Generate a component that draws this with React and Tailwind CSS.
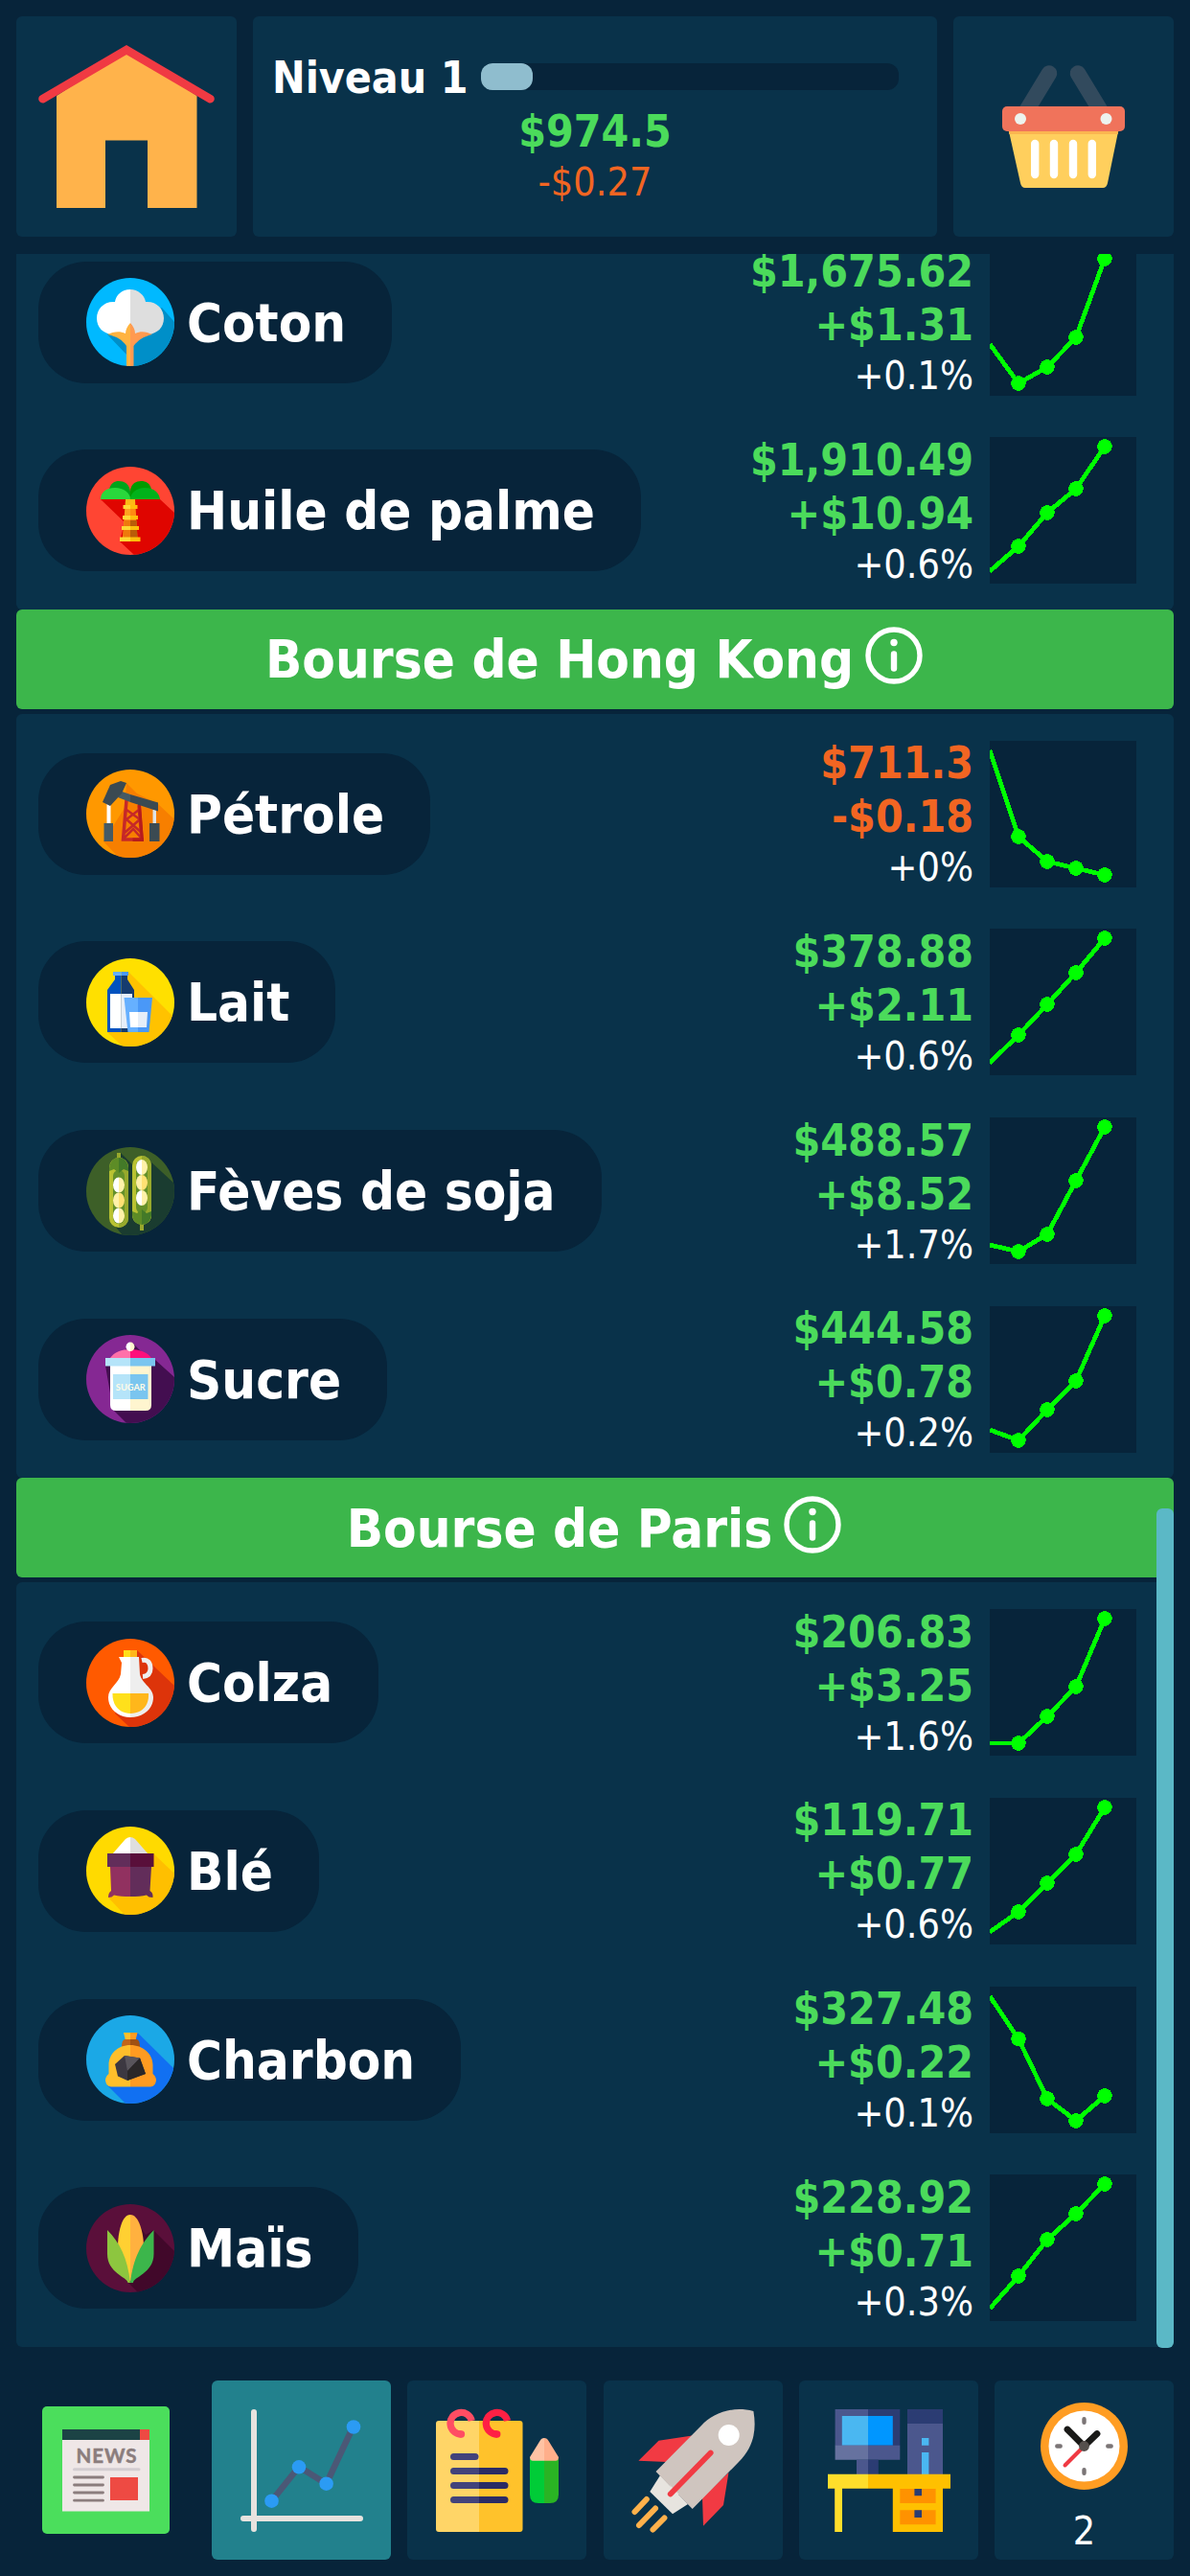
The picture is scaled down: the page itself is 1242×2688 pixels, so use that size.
import React from "react";

/* ---------- commodity icons (92 x 92 discs) ---------- */

function Disc({ id, color, children }) {
  return (
    <svg viewBox="0 0 92 92" className="block h-[92px] w-[92px] shrink-0">
      <defs>
        <clipPath id={id}>
          <circle cx="46" cy="46" r="46" />
        </clipPath>
      </defs>
      <g clipPath={`url(#${id})`}>
        <rect width="92" height="92" fill={color} />
        {children}
      </g>
    </svg>
  );
}

const Cotton = () => (
  <Disc id="cotton" color="#00b9ff">
    <path d="M79 31L92 46V92H42V80L22 59Z" fill="#008fc8" />
    <path d="M46 12C37 12 31 18 30 25C19 24 11 32 11 42C11 52 18 58 27 59H46Z" fill="#fff" />
    <path d="M46 12C54 12 61 18 62 25C73 24 81 32 81 42C81 52 74 58 65 59H46Z" fill="#dedede" />
    <path d="M46 47C43 50 41 54 41 58C35 55 28 56 22 59C32 61 38 65 42 71V92H46Z" fill="#ffb340" />
    <path d="M46 47C49 50 51 54 51 58C57 55 63 56 69 59C60 61 54 65 49.500 71V92H46Z" fill="#ff9a50" />
  </Disc>
);

const Palm = () => (
  <Disc id="palm" color="#ff4533">
    <path d="M15 34H77L92 48V92H50L35 78L40 58Z" fill="#df0500" />
    <path d="M24 24C25 18 29 15 34 15C41 15 45 19 46 26V34H24Z" fill="#00a41a" />
    <path d="M46 26C46 19 51 15 57 15C63 15 67 18 68 24V34H46Z" fill="#009b00" />
    <path d="M15 34C15 27 20 22 30 22C39 22 46 27 46 34Z" fill="#29d83c" />
    <path d="M46 34C46 27 53 22 61 22C71 22 76 27 77 34Z" fill="#00b21a" />
    <path d="M41 34H46V75H38Z" fill="#ffa21f" />
    <path d="M46 34H51L53.500 75H46Z" fill="#ff8a12" />
    <path d="M39.500 56H46V75H38.500Z" fill="#ee7a0c" />
    <path d="M46 56H52.500L53.500 75H46Z" fill="#b95c08" />
    <path d="M38.500 40H46V44H38.500ZM38 51H46V55H38ZM37 62H46V66H37ZM35 73.500H46V78H35Z" fill="#ffd833" />
    <path d="M46 40H53.500V44H46ZM46 51H54V55H46ZM46 62H55V66H46ZM46 73.500H56.500V78H46Z" fill="#ffbd0a" />
    <path d="M41 34H51V40H41Z" fill="#ffb816" />
  </Disc>
);

const Oil = () => (
  <Disc id="oil" color="#ff9800">
    <path d="M42 14L53 25L75 36L92 52V92H34L18 75L40 40Z" fill="#f77f00" />
    <path d="M42 32L38.500 73H58L55 37" fill="none" stroke="#c62828" strokeWidth="3.500" />
    <path d="M42 42L56 52L40 66M55 42L42 52L58 66M39 72L49 62L58 72" fill="none" stroke="#c62828" strokeWidth="2.500" />
    <path d="M48.500 71.500H60V75H48.500ZM54 36H57L60 75H57Z" fill="#b71c1c" />
    <path d="M21.500 36H25.500V56H21.500Z" fill="#fff" />
    <path d="M69.500 42H73V56H69.500Z" fill="#dfe3e6" />
    <path d="M18.500 56H28V75H18.500Z" fill="#455a64" />
    <path d="M66 56H76.500V75H66Z" fill="#3b4a52" />
    <path d="M37.500 23L46 26V34L33 29Z" fill="#455a64" />
    <path d="M46 26L75 34.500V43.500L46 34Z" fill="#3b4a52" />
    <path d="M17 34L25 16L36 12L42 14L37 25L25 38Z" fill="#3b4a52" />
  </Disc>
);

const Milk = () => (
  <Disc id="milk" color="#ffe000">
    <path d="M44 14L92 62V92H38L22 77Z" fill="#ffc200" />
    <path d="M28 14H36.500V18H28Z" fill="#66b0ff" />
    <path d="M36.500 14H44V18H36.500Z" fill="#4a98f7" />
    <path d="M30 18H36.500V77H22V33L30 22Z" fill="#0052bf" />
    <path d="M36.500 18H43V22L50 33V77H36.500Z" fill="#163c6f" />
    <path d="M25 37H36.500V73H25Z" fill="#fff" />
    <path d="M36.500 37H48V73H36.500Z" fill="#e6eef8" />
    <path d="M39.500 41H54V77H43.500Z" fill="#66b0ff" />
    <path d="M54 41H69L65.500 77H54Z" fill="#4a98f7" />
    <path d="M45 56H54V72H46Z" fill="#fff" />
    <path d="M54 56H64L63 72H54Z" fill="#e6eef8" />
  </Disc>
);

const Bean = ({ x, y, a, b }) => (
  <>
    <path d={`M${x} ${y - 8}a6 8 0 0 0 0 16z`} fill={a} />
    <path d={`M${x} ${y - 8}a6 8 0 0 1 0 16z`} fill={b} />
  </>
);

const Soy = () => (
  <Disc id="soy" color="#3d5f28">
    <path d="M36 6L50 20L66 14L92 38V92H38L28 80Z" fill="#1a3c30" />
    <path d="M32 6H36V14H32Z" fill="#98a82c" />
    <rect x="24" y="11" width="20" height="73" rx="10" fill="#b9c232" />
    <path d="M34 11A10 10 0 0 1 44 21V74A10 10 0 0 1 34 84Z" fill="#97a92c" />
    <rect x="28" y="24" width="12" height="56" rx="6" fill="#64902a" />
    <path d="M24 22A10 11 0 0 1 34 11V27L29 23L24 25Z" fill="#5d8c26" />
    <path d="M34 11A10 11 0 0 1 44 22V25L39 23L34 27Z" fill="#437a28" />
    <Bean x={34} y={39.5} a="#fff" b="#fff1a8" />
    <Bean x={34} y={55.5} a="#fff1a8" b="#ffe173" />
    <Bean x={34} y={71.5} a="#fff" b="#fff1a8" />
    <path d="M56 78H60V87H56Z" fill="#98a82c" />
    <rect x="48" y="9" width="20" height="72" rx="10" fill="#b9c232" />
    <path d="M58 9A10 10 0 0 1 68 19V71A10 10 0 0 1 58 81Z" fill="#97a92c" />
    <rect x="52" y="13" width="12" height="56" rx="6" fill="#64902a" />
    <path d="M48 67L53 69L58 65V81A10 11 0 0 1 48 71Z" fill="#5d8c26" />
    <path d="M68 67L63 69L58 65V81A10 11 0 0 0 68 71Z" fill="#437a28" />
    <Bean x={58} y={21} a="#fff" b="#fff1a8" />
    <Bean x={58} y={37} a="#fff1a8" b="#ffe173" />
    <Bean x={58} y={53} a="#fff" b="#fff1a8" />
  </Disc>
);

const Sugar = () => (
  <Disc id="sugar" color="#852893">
    <path d="M49 9L60 20L72 26L92 44V92H42L28 78L20 32Z" fill="#430e50" />
    <path d="M25 24C29 18 37 15 46 15V24Z" fill="#ff70a9" />
    <path d="M68 24C64 18 55 15 46 15V24Z" fill="#ff0f7c" />
    <path d="M46 7.500a4.500 4.800 0 0 0 0 9.600z" fill="#fff" />
    <path d="M46 7.500a4.500 4.800 0 0 1 0 9.600z" fill="#fff5cf" />
    <path d="M25 32H46V79H31Q25 79 25 73Z" fill="#fff" />
    <path d="M46 32H68V73Q68 79 62 79H46Z" fill="#fff5cf" />
    <path d="M20 24H46V32.500H20ZM28 41H46V67H28Z" fill="#b5e4f9" />
    <path d="M46 24H72V32.500H46ZM46 41H64.500V67H46Z" fill="#7ac5ef" />
    <text x="46.300" y="57.700" textAnchor="middle" textLength="31" lengthAdjust="spacingAndGlyphs" fontFamily="Lato, sans-serif" fontWeight="700" fontSize="9.800" fill="#fffbe8">SUGAR</text>
  </Disc>
);

const Rapeseed = () => (
  <Disc id="rapeseed" color="#ff5a00">
    <path d="M53 12L92 49V92H45L30 78Z" fill="#dd340a" />
    <path d="M58 22.500C64 21 67 25 67 31C67 36 64 39 59 39.500" fill="none" stroke="#eee" strokeWidth="5" />
    <path d="M39 12H46V20H39Z" fill="#ffe01b" />
    <path d="M46 12H53V20H46Z" fill="#ffb71b" />
    <path d="M34 19H46V82C33 82 23 73 23 61C23 51 34 47 36 37L37 25Z" fill="#fff" />
    <path d="M46 19H55L56 37C58 47 70 51 70 61C70 73 60 82 46 82Z" fill="#eee" />
    <path d="M27.500 57H46V78C36 78 27 71 27.500 57Z" fill="#ffe01b" />
    <path d="M46 57H65C66 71 57 78 46 78Z" fill="#ffb71b" />
  </Disc>
);

const Wheat = () => (
  <Disc id="wheat" color="#ffda00">
    <path d="M70 28L92 49V92H40L23 74Z" fill="#ffbf00" />
    <path d="M27 29L41 13Q43.500 11 46 11V29Z" fill="#fff" />
    <path d="M65 29L51 13Q48.500 11 46 11V29Z" fill="#dedede" />
    <path d="M25 42H46V73Q36 73 29 71.500Q27 74 23 74Q23 69 26 67Z" fill="#913160" />
    <path d="M68 42H46V73Q56 73 63 71.500Q65 74 69.500 74Q70 69 66.500 67Z" fill="#622d5a" />
    <path d="M22 28H46V42H22Z" fill="#622d5a" />
    <path d="M46 28H70.500V42H46Z" fill="#590f3a" />
  </Disc>
);

const Coal = () => (
  <Disc id="coal" color="#1ba8e6">
    <path d="M53.500 18L92 56V92H41L22 73Z" fill="#1170f2" />
    <path d="M39 18H46V26H41Z" fill="#ffbf2b" />
    <path d="M53.500 18H46V26H51.500Z" fill="#ff9b21" />
    <path d="M46 25H40Q37 26 37 33H46Z" fill="#c3661a" />
    <path d="M46 25H53Q56 26 56 33H46Z" fill="#a05012" />
    <path d="M46 31C33 31 23.500 40 23.500 52V61Q20 64 20 68Q21 74 26 74.500H46Z" fill="#ffbf2b" />
    <path d="M46 31C59 31 69.500 40 69.500 52V61Q73 64 73 68Q72 74 67 74.500H46Z" fill="#ff9b21" />
    <path d="M40 42L56 44.500L62 61L43 68L33 63.500L30 51Z" fill="#3c3841" />
    <path d="M40 42L56 44.500L43 58Z" fill="#59555c" />
    <path d="M56 44.500L62 61L43 68V58Z" fill="#2a2728" />
  </Disc>
);

const Corn = () => (
  <Disc id="corn" color="#5a0f3a">
    <path d="M50 14L62 32L70 27L92 49V92H54L42 80Z" fill="#41082a" />
    <path d="M46 11C37 11 33 30 33 45L45 80H46Z" fill="#ffd032" />
    <path d="M46 11C55 11 60 30 60 45L47 80H46Z" fill="#ffb13f" />
    <path d="M22 27C35 40 43 56 46 82H43.500C43 76 22 72 22 52Z" fill="#8dc63f" />
    <path d="M70.500 27C58 40 49 56 46 82H49C49 76 70.500 72 70.500 52Z" fill="#3cb64b" />
  </Disc>
);

/* ---------- top bar icons ---------- */

const House = () => (
  <svg viewBox="17 17 230 230" className="block h-full w-full">
    <path d="M59 100L132 52L205.500 100V217H154V146.500H110V217H59Z" fill="#ffb34b" />
    <path d="M44.500 103.200L132 52L219.500 103.200" fill="none" stroke="#f03a43" strokeWidth="8.600" strokeLinecap="round" />
  </svg>
);

const Basket = () => (
  <svg viewBox="995 17 230 230" className="block h-full w-full">
    <path d="M1068 121L1095 76.500M1152 121L1125 76.500" stroke="#324a5d" strokeWidth="16.500" strokeLinecap="round" />
    <path d="M1052.500 135H1167.500L1156 191Q1155 196 1151 196H1070Q1066 196 1065 191Z" fill="#ffcf5d" />
    <path d="M1052.500 135H1167.500L1166.800 140H1053.300Z" fill="#fbb550" />
    <rect x="1046" y="111" width="128" height="26" rx="5" fill="#f0735b" />
    <circle cx="1065" cy="124" r="6" fill="#edf3ee" />
    <circle cx="1154.500" cy="124" r="6" fill="#edf3ee" />
    <path d="M1080.200 150V182M1100 150V182M1120 150V182M1139.800 150V182" stroke="#fff" strokeWidth="8.400" strokeLinecap="round" />
  </svg>
);

/* ---------- bottom bar icons (187 x 187 tiles) ---------- */

const TileSvg = ({ children }) => (
  <svg viewBox="0 0 187 187" className="block h-full w-full">
    {children}
  </svg>
);

const News = () => (
  <TileSvg>
    <g transform="translate(27 27)">
      <rect width="133" height="133" rx="5" fill="#4bde5c" />
      <path d="M21 24H102V35H21Z" fill="#1c4345" />
      <path d="M102 24H112V35H102Z" fill="#ee4a43" />
      <path d="M21 35H112V109.500H21Z" fill="#efe7e7" />
      <text x="67" y="58.700" textAnchor="middle" textLength="63" lengthAdjust="spacing" fontFamily="Lato, sans-serif" fontWeight="700" fontSize="20.500" fill="#8b7d7d" stroke="#8b7d7d" strokeWidth="0.500">NEWS</text>
      <path d="M33.500 65.700H101" stroke="#d3cdd1" strokeWidth="3" strokeLinecap="round" />
      <path d="M33.500 74H63.500M33.500 82H63.500M33.500 90H63.500M33.500 98.200H63.500" stroke="#8b7d7d" strokeWidth="2.800" strokeLinecap="round" />
      <path d="M71 74H100V98H71Z" fill="#ee4a43" />
    </g>
  </TileSvg>
);

const Trend = () => (
  <TileSvg>
    <path d="M62.500 125.700L91 90L119.600 107.700L147.700 48" fill="none" stroke="#4b5876" strokeWidth="6.500" />
    <path d="M33 144H155M44 33V155" stroke="#e7e3df" strokeWidth="6" strokeLinecap="round" />
    <circle cx="62.500" cy="125.700" r="7.300" fill="#2b9bf4" />
    <circle cx="91" cy="90.300" r="7.300" fill="#2b9bf4" />
    <circle cx="119.600" cy="107.700" r="7.300" fill="#2b9bf4" />
    <circle cx="148" cy="48.500" r="7.300" fill="#2b9bf4" />
  </TileSvg>
);

const Notes = () => (
  <TileSvg>
    <path d="M75 42H33Q30 42 30 45V155Q30 158 33 158H75Z" fill="#ffd567" />
    <path d="M75 42H117.500Q120.500 42 120.500 45V155Q120.500 158 117.500 158H75Z" fill="#ffc22b" />
    <path d="M67.300 42A11.300 11.300 0 1 0 56.500 56" fill="none" stroke="#ff4d63" strokeWidth="7.300" />
    <circle cx="56.500" cy="56" r="3.650" fill="#ff4d63" />
    <path d="M104.600 42A11.300 11.300 0 1 0 93.800 56" fill="none" stroke="#ff2044" strokeWidth="7.300" />
    <circle cx="93.800" cy="56" r="3.650" fill="#ff2044" />
    <path d="M48.500 79.500H71" stroke="#43437b" strokeWidth="7" strokeLinecap="round" />
    <path d="M80 94.500H102M80 109.500H102M80 124.500H102" stroke="#2b2b64" strokeWidth="7" strokeLinecap="round" />
    <path d="M75 91H85V98H75ZM75 106H85V113H75ZM75 121H85V128H75Z" fill="#2b2b64" />
    <path d="M75 91H48.500a3.500 3.500 0 0 0 0 7H75ZM75 106H48.500a3.500 3.500 0 0 0 0 7H75ZM75 121H48.500a3.500 3.500 0 0 0 0 7H75Z" fill="#43437b" />
    <path d="M128 82H143V128H137Q128 128 128 119Z" fill="#00cc37" />
    <path d="M143 82H158V119Q158 128 149 128H143Z" fill="#2ab424" />
    <path d="M143 60Q140 60 138.500 63L128 80Q128 83.700 131 83.700H143Z" fill="#ffc3a4" />
    <path d="M143 60Q146 60 147.500 63L158 80Q158 83.700 155 83.700H143Z" fill="#ffaf8b" />
  </TileSvg>
);

const Rocket = () => (
  <TileSvg>
    <path d="M92.500 57.500L57.500 62.700L36.400 83.700L66 85ZM130.500 96L125 130L104 151.700L103 122Z" fill="#f13a43" />
    <path d="M59 99L48.300 116L72 139.300L88 129Z" fill="#e7e4df" />
    <path d="M54.500 95L102 47C113 35 133 26 156.400 32C160 53 156 70 141 85L92.700 134Z" fill="#cfc5bf" />
    <path d="M69 109L78.500 118.500L74 121Z" fill="#e7e4df" />
    <circle cx="130.700" cy="57" r="11" fill="#fff" />
    <path d="M111.700 75.500L69.700 118.500" stroke="#f13a43" strokeWidth="5.800" strokeLinecap="round" />
    <path d="M44.800 124L32.500 137M54 133.500L37 151M63.400 143.500L51.500 155.500" stroke="#ffb14b" strokeWidth="6" strokeLinecap="round" />
  </TileSvg>
);

const Desk = () => (
  <TileSvg>
    <path d="M37.600 30H72V68H37.600Z" fill="#4b578d" />
    <path d="M72 30H105.300V68H72Z" fill="#2b3c73" />
    <path d="M44.800 37H72V67.700H44.800Z" fill="#4ab7f1" />
    <path d="M72 37H97.800V67.700H72Z" fill="#0096ff" />
    <path d="M37.600 67.700H72V82.700H37.600Z" fill="#66729f" />
    <path d="M72 67.700H105.300V82.700H72Z" fill="#4b578d" />
    <path d="M60 82.700H72V98H60Z" fill="#4b578d" />
    <path d="M72 82.700H82.800V98H72Z" fill="#2b3c73" />
    <path d="M113 30H150V98H113Z" fill="#4b578d" />
    <path d="M113 30H150V45H113Z" fill="#2b3c73" />
    <path d="M128 60H135.400V67.700H128ZM128 75H135.400V98H128Z" fill="#4ab7f1" />
    <path d="M30 97.700H72V112.700H30ZM37.200 112.700H45V158H37.200Z" fill="#ffde2b" />
    <path d="M72 97.700H158V112.700H72ZM97.800 112.700H150V158H97.800Z" fill="#ffc000" />
    <path d="M105.300 113H142.600V128H105.300ZM105.300 135.300H142.600V150.300H105.300Z" fill="#ff9200" />
    <path d="M120.400 113H128V120.300H120.400ZM120.400 135.300H128V143H120.400Z" fill="#2b3c73" />
  </TileSvg>
);

const Clock = () => (
  <svg viewBox="0 0 91 91" className="mt-[23px] block h-[91px] w-[91px]">
    <circle cx="45.500" cy="45.500" r="45.500" fill="#ff9d23" />
    <circle cx="45.500" cy="45.500" r="37" fill="#fff" />
    <path d="M45.500 17.300V20.700M45.500 70.300V73.700M17.300 45.500H20.700M70.300 45.500H73.700" stroke="#7b7576" strokeWidth="4.400" strokeLinecap="round" />
    <path d="M45.500 45.500L25.500 65.500" stroke="#f03a43" strokeWidth="4" strokeLinecap="round" />
    <path d="M45.500 45.500L28 28M45.500 45.500L59 32.500" stroke="#1a1a18" strokeWidth="6.800" strokeLinecap="round" />
    <circle cx="45.500" cy="45.500" r="5.400" fill="#55504d" />
  </svg>
);

/* ---------- market list ---------- */

const InfoIcon = () => (
  <svg viewBox="0 0 60 60" className="mb-[7px] ml-[12px] mr-[3px] block h-[60px] w-[60px]" fill="none" stroke="#fff" strokeLinecap="round">
    <circle cx="30" cy="30" r="27" strokeWidth="5.400" />
    <path d="M30 28.500V43.500" strokeWidth="6.400" />
    <circle cx="30" cy="16.500" r="3.700" fill="#fff" stroke="none" />
  </svg>
);

function Sparkline({ data }) {
  const points = data.map((y, i) => [i * 30, y]);
  return (
    <svg viewBox="0 0 153 153" shapeRendering="crispEdges" className="block h-[153px] w-[153px] bg-[#07243a]">
      <polyline points={points.map((p) => p.join(",")).join(" ")} fill="none" stroke="#00ff00" strokeWidth="4.800" />
      {points.slice(1).map(([x, y]) => (
        <circle key={x} cx={x} cy={y} r="7.800" fill="#00ff00" />
      ))}
    </svg>
  );
}

function Row({ item }) {
  const Icon = item.icon;
  return (
    <div className="flex h-[196.7px] shrink-0 items-center justify-between pl-[23px] pr-[39px]">
      <div className="flex h-[127px] items-center rounded-[50px] bg-[#07243a] pr-[48px] pl-[50px]">
        <Icon />
        <span className="ml-[13px] mt-[1px] whitespace-nowrap text-[56px] font-bold text-white">{item.name}</span>
      </div>
      <div className="flex items-center">
        <div className={"mt-[1px] mr-[17px] text-right text-[46px] leading-[56px] font-bold " + (item.down ? "text-[#f26522]" : "text-[#4bdb5b]")}>
          <div>{item.price}</div>
          <div>{item.change}</div>
          <div className="text-[41px] leading-[51px] font-normal text-white">{item.percent}</div>
        </div>
        <Sparkline data={item.data} />
      </div>
    </div>
  );
}

function Panel({ items }) {
  return (
    <div className="flex shrink-0 flex-col rounded-[6px] bg-[#09324a] pt-[6px] pb-[4.8px]">
      {items.map((item) => (
        <Row key={item.name} item={item} />
      ))}
    </div>
  );
}

function MarketTitle({ children }) {
  return (
    <div className="mb-[5px] flex h-[104px] shrink-0 items-center justify-center rounded-[6px] bg-[#3cb64b]">
      <span className="ml-[1px] mt-[1px] whitespace-nowrap text-[56px] font-bold text-white">{children}</span>
      <InfoIcon />
    </div>
  );
}

const first = [
  { name: "Coton", icon: Cotton, price: "$1,675.62", change: "+$1.31", percent: "+0.1%", data: [99, 140, 123, 92, 10] },
  { name: "Huile de palme", icon: Palm, price: "$1,910.49", change: "+$10.94", percent: "+0.6%", data: [140, 114, 79, 54, 10] },
];
const hongKong = [
  { name: "Pétrole", icon: Oil, price: "$711.3", change: "-$0.18", percent: "+0%", down: true, data: [10, 100, 126, 133, 140] },
  { name: "Lait", icon: Milk, price: "$378.88", change: "+$2.11", percent: "+0.6%", data: [140, 111, 79, 46, 10] },
  { name: "Fèves de soja", icon: Soy, price: "$488.57", change: "+$8.52", percent: "+1.7%", data: [133, 140, 122, 66, 10] },
  { name: "Sucre", icon: Sugar, price: "$444.58", change: "+$0.78", percent: "+0.2%", data: [129, 140, 108, 78, 10] },
];
const paris = [
  { name: "Colza", icon: Rapeseed, price: "$206.83", change: "+$3.25", percent: "+1.6%", data: [140, 140, 112, 81, 10] },
  { name: "Blé", icon: Wheat, price: "$119.71", change: "+$0.77", percent: "+0.6%", data: [140, 119, 89, 59, 10] },
  { name: "Charbon", icon: Coal, price: "$327.48", change: "+$0.22", percent: "+0.1%", data: [10, 54.5, 117, 140, 114] },
  { name: "Maïs", icon: Corn, price: "$228.92", change: "+$0.71", percent: "+0.3%", data: [140, 106, 68, 41, 10] },
];

const tabs = [
  { id: "news", icon: News, bg: "" },
  { id: "trend", icon: Trend, bg: "bg-[#22818d]" },
  { id: "notes", icon: Notes, bg: "bg-[#09324a]" },
  { id: "rocket", icon: Rocket, bg: "bg-[#09324a]" },
  { id: "desk", icon: Desk, bg: "bg-[#09324a]" },
];

export default function App() {
  return (
    <div className="flex h-[2688px] w-[1242px] flex-col overflow-hidden bg-[#07243a] p-[17px] font-['DejaVu_Sans_Condensed','DejaVu_Sans',sans-serif]">
      <header className="flex h-[230px] shrink-0 gap-[17px]">
        <div className="w-[230px] rounded-[6px] bg-[#09324a]">
          <House />
        </div>
        <div className="flex flex-1 flex-col rounded-[6px] bg-[#09324a] pt-[36px]">
          <div className="flex h-[56px] items-center pr-[40px] pl-[20px]">
            <span className="w-[218px] whitespace-nowrap text-[46px] leading-[56px] font-bold text-white">Niveau 1</span>
            <div className="-mt-[2px] h-[28px] flex-1 rounded-[12px] bg-[#07243a]">
              <div className="h-full w-[54px] rounded-[12px] bg-[#8fbdce]" />
            </div>
          </div>
          <div className="text-center text-[46px] leading-[56px] font-bold text-[#4bdb5b]">$974.5</div>
          <div className="text-center text-[41px] leading-[50px] text-[#f26522]">-$0.27</div>
        </div>
        <div className="w-[230px] rounded-[6px] bg-[#09324a]">
          <Basket />
        </div>
      </header>

      <main className="relative mt-[18px] flex h-[2185px] shrink-0 flex-col justify-end overflow-hidden pb-[1px]">
        <Panel items={first} />
        <MarketTitle>Bourse de Hong Kong</MarketTitle>
        <Panel items={hongKong} />
        <MarketTitle>Bourse de Paris</MarketTitle>
        <Panel items={paris} />
        <div className="absolute right-0 bottom-0 h-[876px] w-[18px] rounded-[6px] bg-[#5bb8c6]" />
      </main>

      <nav className="mt-[34px] flex h-[187px] shrink-0 justify-between">
        {tabs.map(({ id, icon: Icon, bg }) => (
          <div key={id} className={"w-[187px] rounded-[6px] " + bg}>
            <Icon />
          </div>
        ))}
        <div className="flex w-[187px] flex-col items-center rounded-[6px] bg-[#09324a]">
          <Clock />
          <span className="mt-[18px] text-[41px] leading-[50px] text-white">2</span>
        </div>
      </nav>
    </div>
  );
}
